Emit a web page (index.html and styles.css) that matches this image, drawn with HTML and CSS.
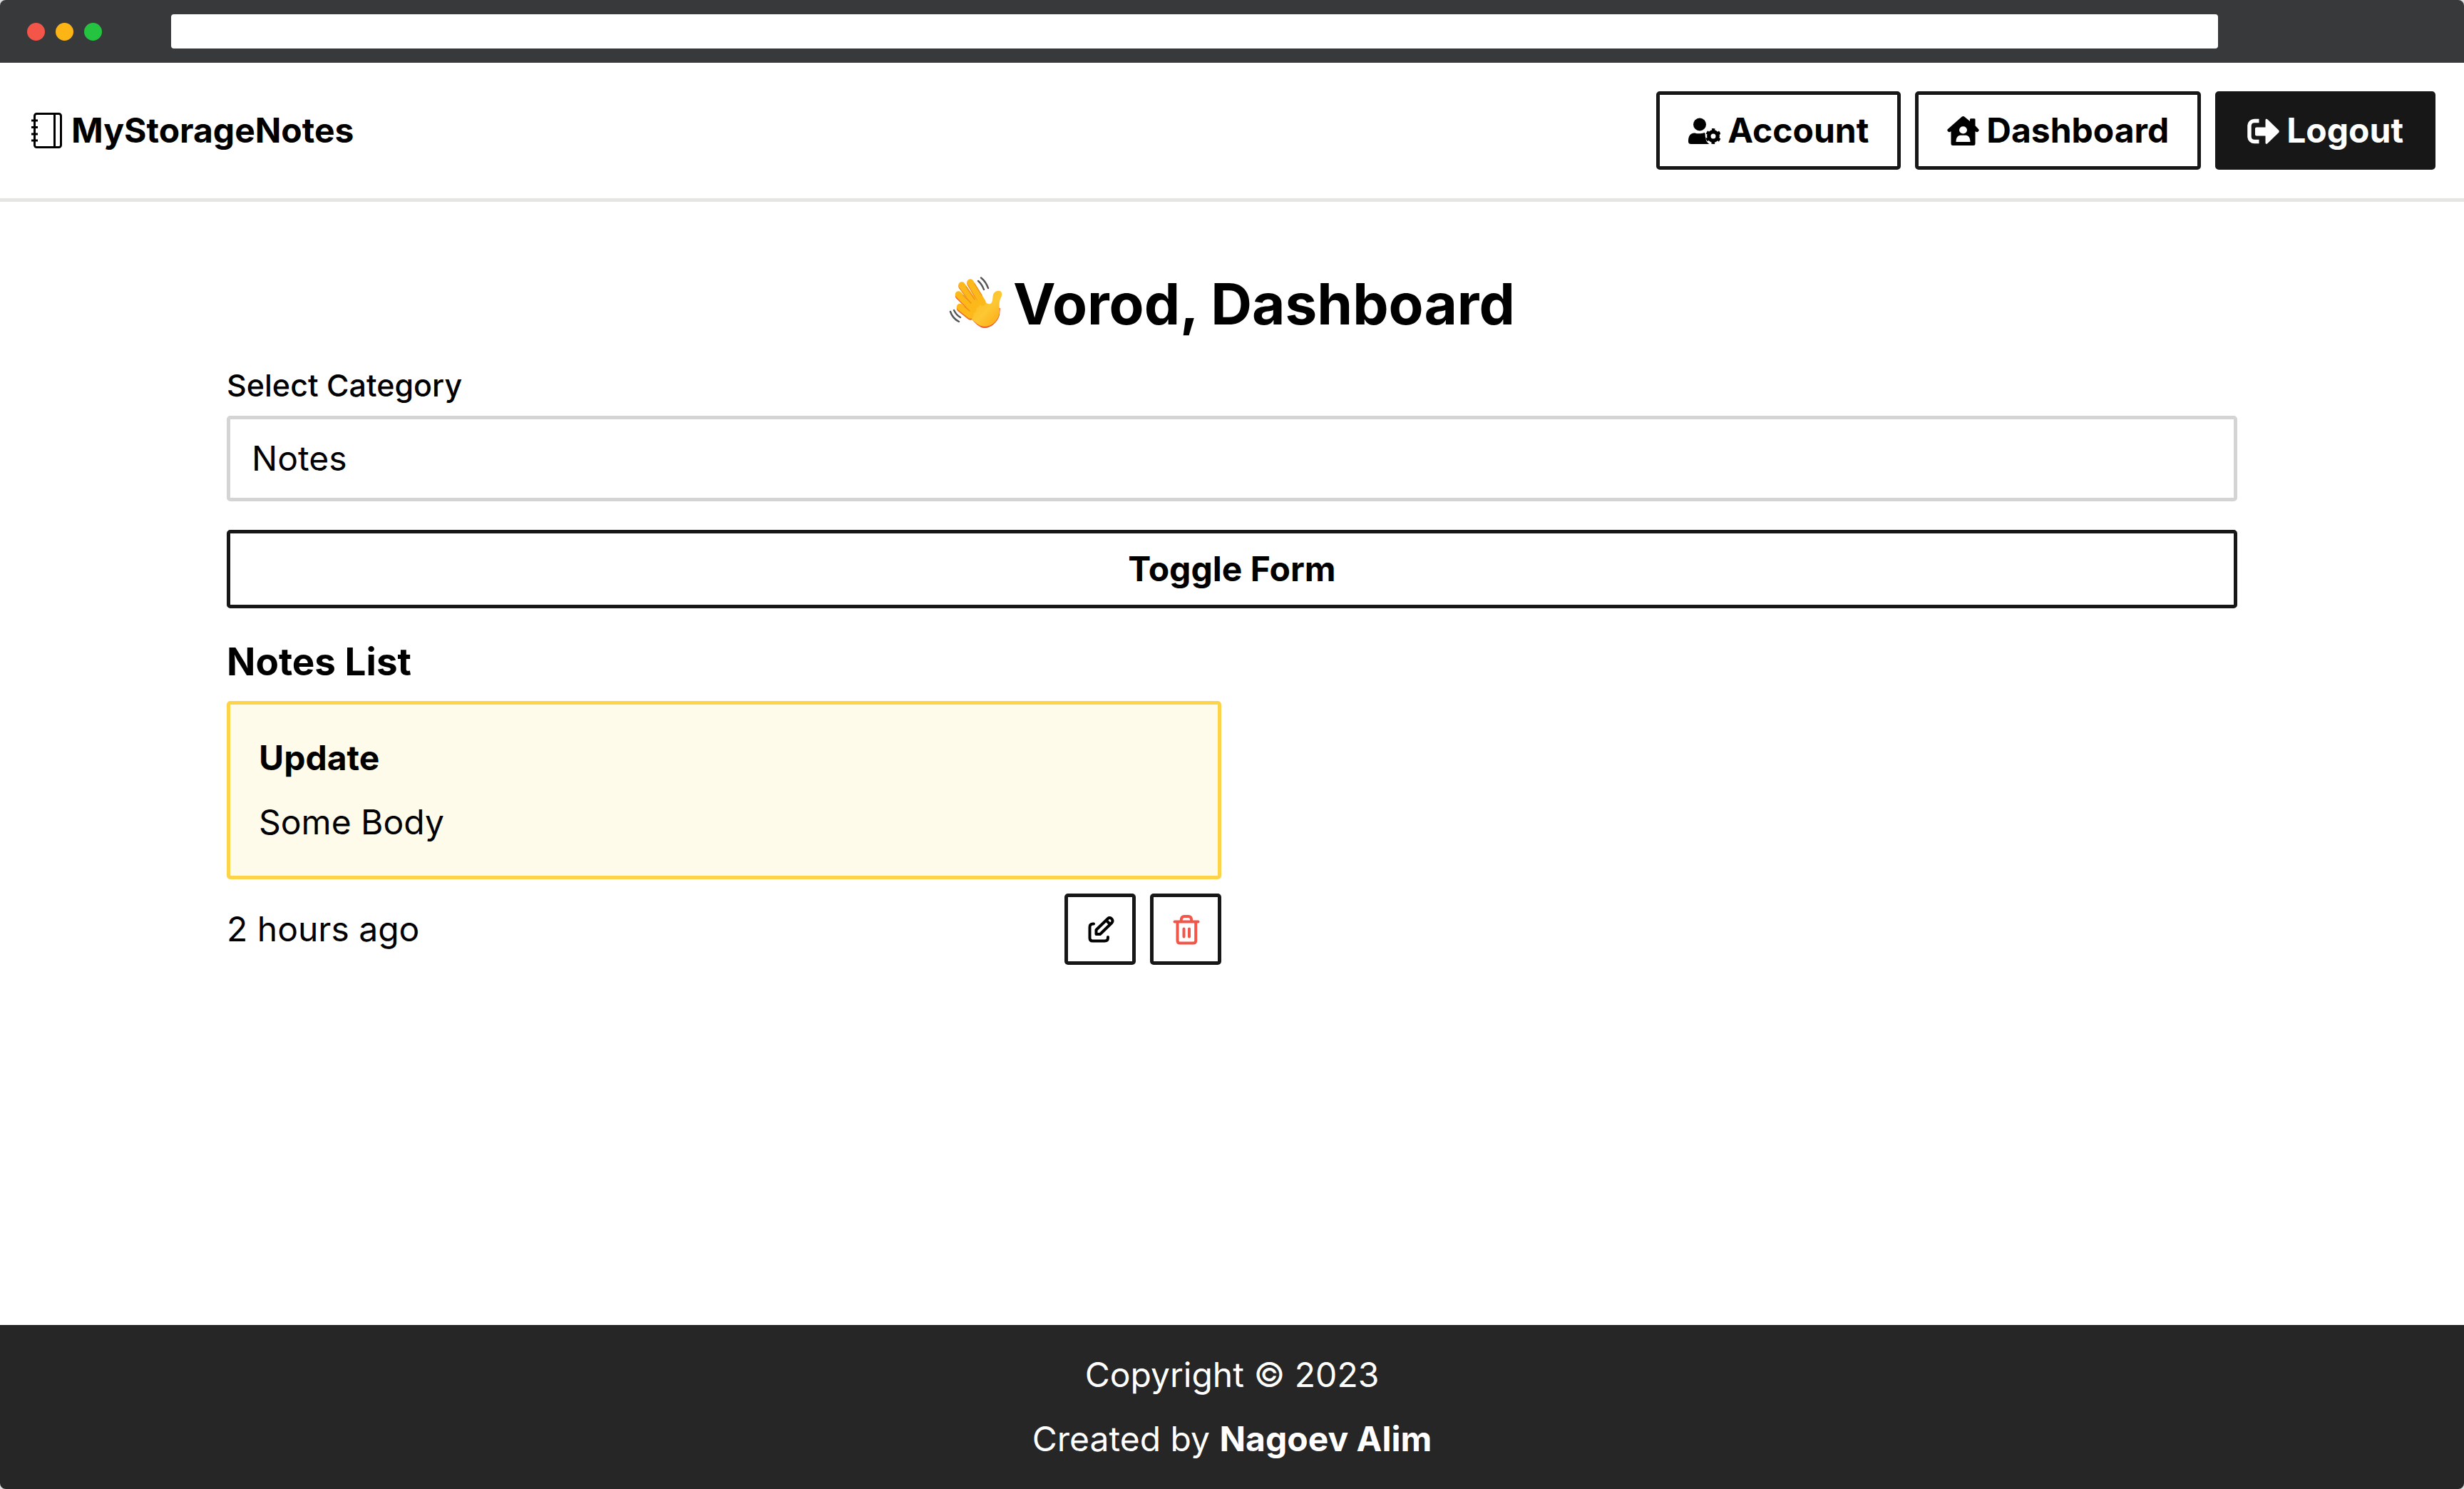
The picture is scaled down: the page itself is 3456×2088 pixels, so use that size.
FILE: index.html
```html
<!DOCTYPE html>
<html lang="en">
<head>
<meta charset="utf-8">
<meta name="viewport" content="width=device-width, initial-scale=1">
<title>MyStorageNotes</title>
<link rel="stylesheet" href="styles.css">
</head>
<body>
<div class="window">
  <div class="chrome">
    <div class="lights">
      <span class="light light-close"></span>
      <span class="light light-min"></span>
      <span class="light light-max"></span>
    </div>
    <input class="address" type="text" aria-label="Address">
  </div>

  <header class="header">
    <a class="logo" href="#">
      <svg class="icon icon-logo" viewBox="0 0 50 50" fill="none" stroke="currentColor" aria-hidden="true">
        <rect x="8.5" y="1.5" width="37" height="47" rx="3" stroke-width="3"/>
        <path d="M36.500 2v46" stroke-width="3"/>
        <path d="M4 11h9M4 20.500h9M4 30h9M4 39h9" stroke-width="3"/>
      </svg>
      <span>MyStorageNotes</span>
    </a>
    <nav class="nav">
      <a class="btn" href="#">
        <svg class="icon" viewBox="0 0 45 45" fill="currentColor" aria-hidden="true">
          <circle cx="16" cy="13.500" r="9"/>
          <path d="M9 25.500c3 1.200 10 1.200 14-.5 1.500 2.500 0 4.500 1.500 7.500 0 3.500 1.500 6.500 5 8.500H4c-2.500 0-4-1-4-3.500 0-7 2-12 9-12z"/>
          <circle cx="35" cy="30" r="6.200" fill="none" stroke="currentColor" stroke-width="5.400"/>
          <circle cx="35" cy="30" r="9" fill="none" stroke="currentColor" stroke-width="3.800" stroke-dasharray="4.400 5.025" stroke-dashoffset="2.200" transform="rotate(-90 35 30)"/>
        </svg>
        <span>Account</span>
      </a>
      <a class="btn" href="#">
        <svg class="icon" viewBox="0 0 45 45" fill="currentColor" aria-hidden="true">
          <path transform="translate(0 2) scale(1 .92)" fill-rule="evenodd" d="M20.600.900a2.800 2.800 0 0 1 3.800 0L32 7.500V5a1.500 1.500 0 0 1 1.500-1.500H38A1.500 1.500 0 0 1 39.500 5v9.500l4.700 5.300c1.800 2.200-1.700 6-4.200 3.500l-.5-.3V42a2.500 2.500 0 0 1-2.500 2.500H8A2.500 2.500 0 0 1 5.500 42V23l-.5.300c-2.500 2.500-6-1.300-4.200-3.500zM22.500 15.500a5.500 5.500 0 1 0 0 11 5.500 5.500 0 0 0 0-11zM12.500 39h20c0-6-2.500-10-6-10h-8c-3.500 0-6 4-6 10z"/>
        </svg>
        <span>Dashboard</span>
      </a>
      <button class="btn btn-dark" type="button">
        <svg class="icon" viewBox="0 0 45 45" fill="currentColor" aria-hidden="true">
          <path d="M16.500 8.500H10A7 7 0 0 0 3 15v16a7 7 0 0 0 7 6.500h6.500" fill="none" stroke="currentColor" stroke-width="5.500"/>
          <path d="M13 17.500h12.500V7.500c0-2 1.500-2.500 3-1L44 21.500c1 1 1 2.500 0 3.500L28.500 40c-1.500 1.500-3 1-3-1V29.500H13c-1.200 0-2-.8-2-2v-8c0-1.200.8-2 2-2z"/>
        </svg>
        <span>Logout</span>
      </button>
    </nav>
  </header>

  <main class="main">
    <h1 class="title">
      <svg class="wave" viewBox="0 3 75 75" aria-hidden="true">
        <defs>
          <linearGradient id="skin" x1="0" y1="0" x2="1" y2="1">
            <stop offset="0" stop-color="#fdb515"/>
            <stop offset=".55" stop-color="#fdc834"/>
            <stop offset="1" stop-color="#fba50f"/>
          </linearGradient>
        </defs>
        <g stroke-linecap="round" stroke-linejoin="round" fill="none">
          <g stroke="#ee6a24" stroke-width="9.500">
            <path d="M30 12.500 46 39M18 16.500 38 43M13.500 30 34 50M15.500 47.500 30 59"/>
          </g>
          <path fill="#ee5a2c" d="M30 60c6 8 13 15 20 15 9 0 18-8 21-18l1-10-12 2z"/>
          <path fill="url(#skin)" d="M27 56c6 8 14 17 23 17 8 0 15-5 19-13 4-9 .5-14 2-22 1-5 4-8 3-12-1-5-9-4-11.500 1-2 4 0 12-4.500 14-4 1.500-8-3-12-8L32 42z"/>
          <g stroke="#fdb81a" stroke-width="9.500">
            <path d="M30 11 47 39M18 15 38 42M13.500 28 34 49M15.500 45.500 30 57"/>
          </g>
          <path stroke="#f08a1c" stroke-width="1.200" d="M24 17 36 35M20 29 31 40M22 45 29 51M36 13 46 29"/>
          <g stroke="#555" stroke-width="2.400">
            <path d="M41 9c4 3 6 7 8 12M45 4.500c5 4 8 9 10 14.500M2 52c2 6 6 11 12 14M7 50c2 4 5 8 9 10"/>
          </g>
        </g>
      </svg>
      <span>Vorod, Dashboard</span>
    </h1>

    <div class="field">
      <label class="label" for="category">Select Category</label>
      <select class="select" id="category">
        <option>Notes</option>
      </select>
    </div>

    <button class="btn btn-block" type="button">Toggle Form</button>

    <section class="notes">
      <h2 class="subtitle">Notes List</h2>
      <div class="grid">
        <article class="note">
          <div class="card">
            <h3 class="card-title">Update</h3>
            <p class="card-text">Some Body</p>
          </div>
          <div class="meta">
            <time>2 hours ago</time>
            <div class="actions">
              <button class="btn-icon" type="button" aria-label="Edit">
                <svg class="icon" viewBox="0 0 45 45" fill="none" stroke="currentColor" stroke-width="4" stroke-linecap="round" stroke-linejoin="round" aria-hidden="true">
                  <path d="M13 14.500h-1c-3 0-4.500 1.500-4.500 4.500v15.500c0 2.500 1.500 4 4 4h17c3 0 4.500-1.500 4.500-4.500V33"/>
                  <path d="M16.500 29v-6L33 7c3-3 9 2 5.500 6L22 29zM31 10l5 5"/>
                </svg>
              </button>
              <button class="btn-icon btn-danger" type="button" aria-label="Delete">
                <svg class="icon" viewBox="0 0 45 45" fill="none" stroke="currentColor" stroke-width="4" stroke-linecap="round" stroke-linejoin="round" aria-hidden="true">
                  <path d="M6.500 11.500h33M10.500 11.500V38c0 2.500 1 3.500 3.500 3.500h18.700c2.500 0 3.500-1 3.500-3.500V11.500M15.700 11v-1.500c0-3.500 1.500-5.500 4.500-5.500h5.500c3 0 4.500 2 4.500 5.500V11M19.500 21.500v11M27 21.500v11"/>
                </svg>
              </button>
            </div>
          </div>
        </article>
      </div>
    </section>
  </main>

  <footer class="footer">
    <p>Copyright © 2023</p>
    <p>Created by <a class="author" href="#">Nagoev Alim</a></p>
  </footer>
</div>
</body>
</html>
```
FILE: styles.css
```css
*,
*::before,
*::after {
  box-sizing: border-box;
}

body {
  margin: 0;
  background: #dcdcdc;
  color: #000;
  font: 400 48px/70px Inter, "Liberation Sans", sans-serif;
}

h1,
h2,
h3,
p {
  margin: 0;
}

a {
  color: inherit;
  text-decoration: none;
}

button,
select,
input {
  font: inherit;
  color: inherit;
}

.window {
  display: flex;
  flex-direction: column;
  min-height: 100vh;
  background: #fff;
  border-radius: 8px;
  overflow: hidden;
}

.chrome {
  display: flex;
  align-items: center;
  gap: 97px;
  height: 88px;
  padding: 0 345px 0 38px;
  background: #38393a;
}

.lights {
  display: flex;
  gap: 15px;
}

.light {
  width: 25px;
  height: 25px;
  border-radius: 50%;
}

.light-close {
  background: #f45549;
}

.light-min {
  background: #fdb515;
}

.light-max {
  background: #25c440;
}

.address {
  flex: 1;
  height: 48px;
  padding: 0 20px;
  border: 0;
  border-radius: 4px;
  background: #fff;
  font-size: 30px;
}

.header {
  display: flex;
  align-items: center;
  justify-content: space-between;
  padding: 40px;
  border-bottom: 5px solid #e5e5e3;
}

.logo {
  display: flex;
  align-items: center;
  gap: 10px;
  font-weight: 700;
}

.nav {
  display: flex;
  gap: 20px;
}

.icon {
  flex: none;
  width: 45px;
  height: 45px;
}

.icon-logo {
  width: 50px;
  height: 50px;
}

.btn {
  display: flex;
  align-items: center;
  justify-content: center;
  gap: 10px;
  padding: 20px 40px;
  border: 5px solid #171717;
  border-radius: 5px;
  background: #fff;
  font-weight: 700;
  line-height: 60px;
}

.btn-dark {
  background: #171717;
  color: #fff;
}

.btn-block {
  width: 100%;
  margin-top: 40px;
}

.main {
  flex: 1;
  width: 100%;
  max-width: 2880px;
  margin: 0 auto;
  padding: 80px 30px;
}

.title {
  display: flex;
  align-items: center;
  justify-content: center;
  gap: 15px;
  margin-bottom: 20px;
  font-size: 80px;
  line-height: 125px;
}

.wave {
  width: 75px;
  height: 75px;
}

.field {
  display: flex;
  flex-direction: column;
  gap: 10px;
}

.label {
  font-size: 43px;
  font-weight: 500;
  line-height: 65px;
}

.select {
  appearance: none;
  width: 100%;
  height: 120px;
  padding: 0 30px;
  border: 5px solid #d4d4d4;
  border-radius: 5px;
  background: #fff;
}

.notes {
  margin-top: 40px;
}

.subtitle {
  margin-bottom: 20px;
  font-size: 53px;
}

.grid {
  display: grid;
  grid-template-columns: 1fr 1fr;
  gap: 30px;
}

.note {
  display: flex;
  flex-direction: column;
  gap: 20px;
}

.card {
  display: flex;
  flex-direction: column;
  gap: 20px;
  padding: 40px;
  border: 5px solid #fdd349;
  border-radius: 5px;
  background: #fefbea;
}

.card-title {
  font-size: 48px;
}

.meta {
  display: flex;
  align-items: center;
  justify-content: space-between;
}

.actions {
  display: flex;
  gap: 20px;
}

.btn-icon {
  display: flex;
  align-items: center;
  justify-content: center;
  width: 100px;
  height: 100px;
  padding: 0;
  border: 5px solid #171717;
  border-radius: 5px;
  background: #fff;
}

.btn-danger svg {
  color: #f45549;
}

.footer {
  display: flex;
  flex-direction: column;
  gap: 20px;
  padding: 35px;
  background: #262626;
  color: #fff;
  text-align: center;
}

.author {
  font-weight: 700;
}
```
